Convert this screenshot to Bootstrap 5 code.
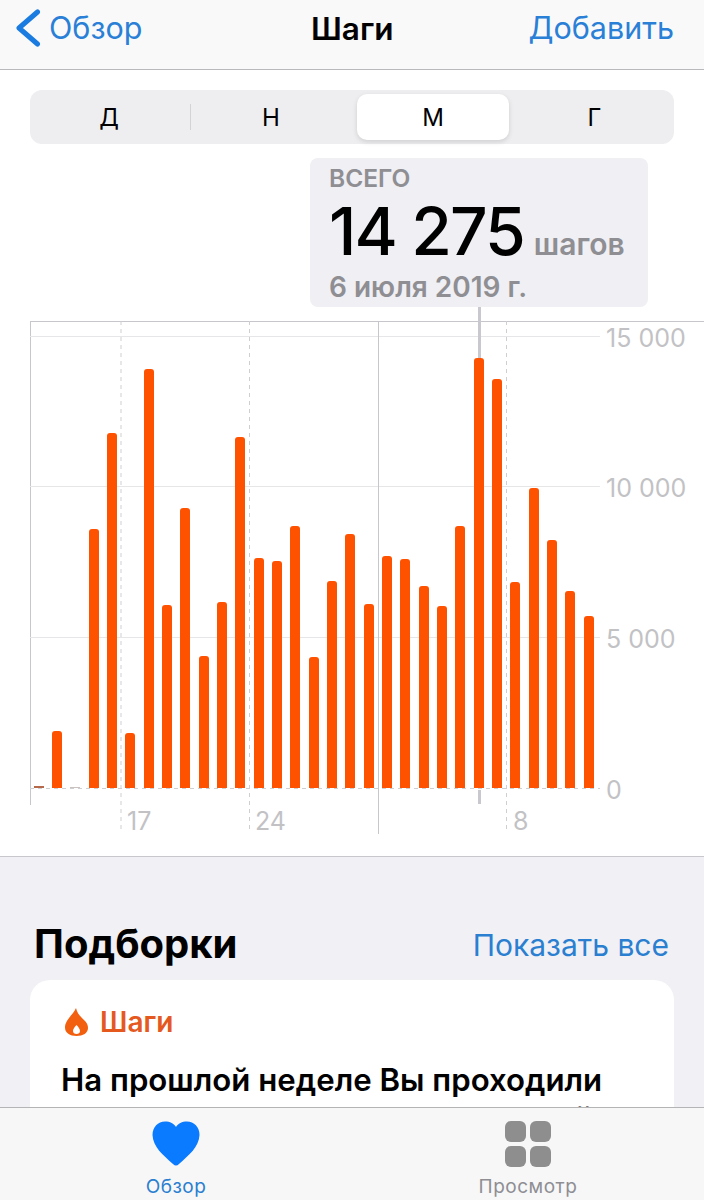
<!DOCTYPE html>
<html lang="ru">
<head>
    <meta charset="UTF-8">
    <meta name="viewport" content="width=device-width, initial-scale=1.0">
    <title>Шаги</title>
    <link href="https://cdn.jsdelivr.net/npm/bootstrap@5.3.0/dist/css/bootstrap.min.css" rel="stylesheet">
    <style>
        body {
            width: 704px;
            height: 1200px;
            overflow: hidden;
            font-family: Inter, Roboto, "Liberation Sans", sans-serif;
            background: #fff;
        }
        .top-bar {
            height: 70px;
            flex: none;
            padding: 0 30px 13px 16px;
            background: #f9f9fa;
            border-bottom: 1px solid #b9b9bc;
            font-size: 30.500px;
            color: #2a7fd6;
        }
        .top-title { color: #000; font-weight: 600; font-size: 31.500px; left: 311px; top: 5px; }
        .segments {
            height: 54px;
            margin: 20px 30px 0;
            padding: 4px;
            background: #eeeef0;
            border-radius: 12px;
            font-size: 24px;
            color: #000;
        }
        .seg-first { width: 156px; padding: 2px 6px 0 0; }
        .seg-item { width: 160px; padding-top: 2px; }
        .seg-last { width: 157px; padding: 2px 0 0 6px; }
        .seg-active { width: 152px; margin: 0 4px 0 6px; padding-top: 2px; background: #fff; border-radius: 10px; box-shadow: 0 2px 5px rgba(0,0,0,.13); }
        .seg-split { width: 1px; height: 26px; background: #d3d3d6; }
        .callout {
            width: 338px;
            height: 149px;
            margin: 14px 0 14px 310px;
            padding: 5px 20px 0 19px;
            background: #efeff4;
            border-radius: 8px;
            color: #8e8e93;
        }
        .callout-head { font-size: 24.500px; font-weight: 600; line-height: 30px; white-space: nowrap; }
        .callout-num { font-size: 66px; font-weight: 500; line-height: 76px; color: #000; letter-spacing: -2px; white-space: nowrap; }
        .callout-unit { font-size: 30px; font-weight: 600; margin-left: 10px; }
        .callout-date { font-size: 28px; font-weight: 600; line-height: 36px; white-space: nowrap; }
        .chart-area { height: 536px; flex: none; border-bottom: 1px solid #c8c8cc; }
        .chart-lines { position: absolute; left: 0; top: 0; overflow: visible; }
        .bar-row { position: absolute; left: 33.7px; top: 0; height: 467px; gap: 8.33px; }
        .step-bar { width: 10px; flex: none; background: #ff5200; border-radius: 3px 3px 0 0; }
        .step-bar.low { background: #b5694a; height: 2px; border-radius: 0; }
        .step-bar.none { background: #c9c2be; height: 1px; border-radius: 0; }
        .axis-num { position: absolute; font-size: 25px; line-height: 30px; color: #c2c2c5; }
        .feed { flex: 1 1 0; min-height: 0; overflow: hidden; background: #f0f0f5; padding: 0 30px; }
        .feed-head { height: 123px; padding: 63px 5px 0 4px; }
        .feed-title { font-size: 40px; font-weight: 700; line-height: 48px; color: #000; }
        .feed-link { font-size: 30px; line-height: 42px; color: #2a7fd0; }
        .tip-box { background: #fff; border-radius: 20px 20px 0 0; padding: 24px 31px 0; height: 200px; }
        .tip-tag { font-size: 28px; font-weight: 600; color: #e5591f; line-height: 36px; gap: 11px; }
        .tip-flame { margin-left: 4px; }
        .tip-text { font-size: 31.200px; font-weight: 600; color: #000; line-height: 40px; margin-top: 20px; white-space: nowrap; }
        .tip-rest { margin-top: -1px; padding-right: 50px; }
        .tab-bar { height: 93px; flex: none; background: #f7f7f8; border-top: 1px solid #b4b4b6; padding: 13px 0 0; }
        .tab-item { width: 352px; font-size: 19px; line-height: 22px; letter-spacing: .5px; gap: 9px; }
        .tab-on { color: #2a7fd0; }
        .tab-off { color: #8e8e93; }
        .icon-box { height: 46px; }
    </style>
</head>
<body class="d-flex flex-column">
    <!-- top bar -->
    <div class="top-bar d-flex align-items-center justify-content-between position-relative">
        <div class="d-flex align-items-center gap-2">
            <svg width="25" height="38" viewBox="0 0 25 38"><path d="M21.500 3 3 19l18.500 16" fill="none" stroke="#1a7be0" stroke-width="5" stroke-linecap="round" stroke-linejoin="round"/></svg>
            <span>Обзор</span>
        </div>
        <span class="top-title position-absolute">Шаги</span>
        <span>Добавить</span>
    </div>

    <!-- period switch -->
    <div class="segments d-flex align-items-center flex-none">
        <div class="seg-first text-center">Д</div>
        <div class="seg-split"></div>
        <div class="seg-item text-center">Н</div>
        <div class="seg-active d-flex align-items-center justify-content-center h-100">М</div>
        <div class="seg-last text-center">Г</div>
    </div>

    <div class="callout flex-none">
        <div class="callout-head">ВСЕГО</div>
        <div class="d-flex align-items-baseline"><span class="callout-num">14 275</span><span class="callout-unit">шагов</span></div>
        <div class="callout-date">6 июля 2019 г.</div>
    </div>

    <!-- chart -->
    <div class="chart-area position-relative">
        <svg class="chart-lines" width="704" height="536">
            <line x1="30" x2="704" y1="0.500" y2="0.500" stroke="#c7c7cb"/>
            <line x1="30.500" x2="30.500" y1="0" y2="484" stroke="#c7c7cb"/>
            <line x1="30" x2="600" y1="15.500" y2="15.500" stroke="#e6e6e9"/>
            <line x1="30" x2="600" y1="165.500" y2="165.500" stroke="#e6e6e9"/>
            <line x1="30" x2="600" y1="316.500" y2="316.500" stroke="#e6e6e9"/>
            <line x1="30" x2="600" y1="467.500" y2="467.500" stroke="#cfcfd2" stroke-dasharray="4 4"/>
            <line x1="121" x2="121" y1="0" y2="512" stroke="#cfcfd2" stroke-dasharray="4 4"/>
            <line x1="249.500" x2="249.500" y1="0" y2="512" stroke="#cfcfd2" stroke-dasharray="4 4"/>
            <line x1="506.500" x2="506.500" y1="0" y2="512" stroke="#cfcfd2" stroke-dasharray="4 4"/>
            <line x1="378.500" x2="378.500" y1="0" y2="513" stroke="#c7c7cb"/>
            <line x1="479.500" x2="479.500" y1="-14" y2="40" stroke="#c8c8ce" stroke-width="3"/>
            <line x1="479.500" x2="479.500" y1="469" y2="483" stroke="#c8c8ce" stroke-width="3"/>
        </svg>
        <div class="bar-row d-flex align-items-end" id="bars"></div>
        <span class="axis-num" style="left:606px;top:2px">15 000</span>
        <span class="axis-num" style="left:606px;top:152px">10 000</span>
        <span class="axis-num" style="left:606px;top:303px">5 000</span>
        <span class="axis-num" style="left:606px;top:454px">0</span>
        <span class="axis-num" style="left:127px;top:485px">17</span>
        <span class="axis-num" style="left:255px;top:485px">24</span>
        <span class="axis-num" style="left:513px;top:485px">8</span>
    </div>

    <!-- highlights -->
    <div class="feed">
        <div class="feed-head d-flex justify-content-between align-items-start">
            <span class="feed-title">Подборки</span>
            <span class="feed-link mt-1">Показать все</span>
        </div>
        <div class="tip-box">
            <div class="tip-tag d-flex align-items-center">
                <svg class="tip-flame" width="24" height="29" viewBox="0 0 24 29"><path fill-rule="evenodd" d="M11 0c1 5 4 8 8 12 3 3 4 5 4 8 0 5-5 8-11.500 8S0 25 0 19.500C0 12 8 7 11 0Zm.5 17C9 19.500 8 21.500 8 23c0 2 1.500 3 3.500 3s3.500-1 3.500-3c0-1.500-1-3.500-3.500-6Z" fill="#f2600f"/></svg>
                <span>Шаги</span>
            </div>
            <div class="tip-text">На прошлой неделе Вы проходили</div>
            <div class="tip-text tip-rest text-end">й</div>
        </div>
    </div>

    <!-- tab bar -->
    <div class="tab-bar d-flex">
        <div class="tab-item tab-on d-flex flex-column align-items-center">
            <div class="icon-box">
                <svg width="50" height="46" viewBox="0 0 50 46"><path d="M25 44.500c-1 0-2-.5-3-1.500C12 34 2 26 1.500 14 1.500 6 7 .5 14 .5c5 0 9 2 11 5.500 2-3.500 6-5.500 11-5.500 7 0 12.500 5.500 12.500 13.500C48 26 38 34 28 43c-1 1-2 1.500-3 1.500Z" fill="#0a7aff"/></svg>
            </div>
            <span>Обзор</span>
        </div>
        <div class="tab-item tab-off d-flex flex-column align-items-center">
            <div class="icon-box">
                <svg width="46" height="46" viewBox="0 0 46 46" fill="#8e8e8e">
                    <rect x="0" y="0" width="21" height="21" rx="6"/><rect x="25" y="0" width="21" height="21" rx="6"/>
                    <rect x="0" y="25" width="21" height="21" rx="6"/><rect x="25" y="25" width="21" height="21" rx="6"/>
                </svg>
            </div>
            <span>Просмотр</span>
        </div>
    </div>

    <script src="https://cdn.jsdelivr.net/npm/bootstrap@5.3.0/dist/js/bootstrap.bundle.min.js"></script>
    <script>
        // bar tops are y values read off the picture, baseline is y=788
        const tops = [787, 731, 788, 529, 433, 733, 369, 605, 508, 656, 602, 437, 558, 561, 526, 657, 581, 534, 604, 556, 559, 586, 606, 526, 358, 379, 582, 488, 540, 591, 616];
        const row = document.getElementById('bars');
        tops.forEach(top => {
            const bar = document.createElement('div');
            bar.className = 'step-bar';
            if (top == 787) bar.classList.add('low');
            else if (top == 788) bar.classList.add('none');
            else bar.style.height = (788 - top) + 'px';
            row.appendChild(bar);
        });
    </script>
</body>
</html>
